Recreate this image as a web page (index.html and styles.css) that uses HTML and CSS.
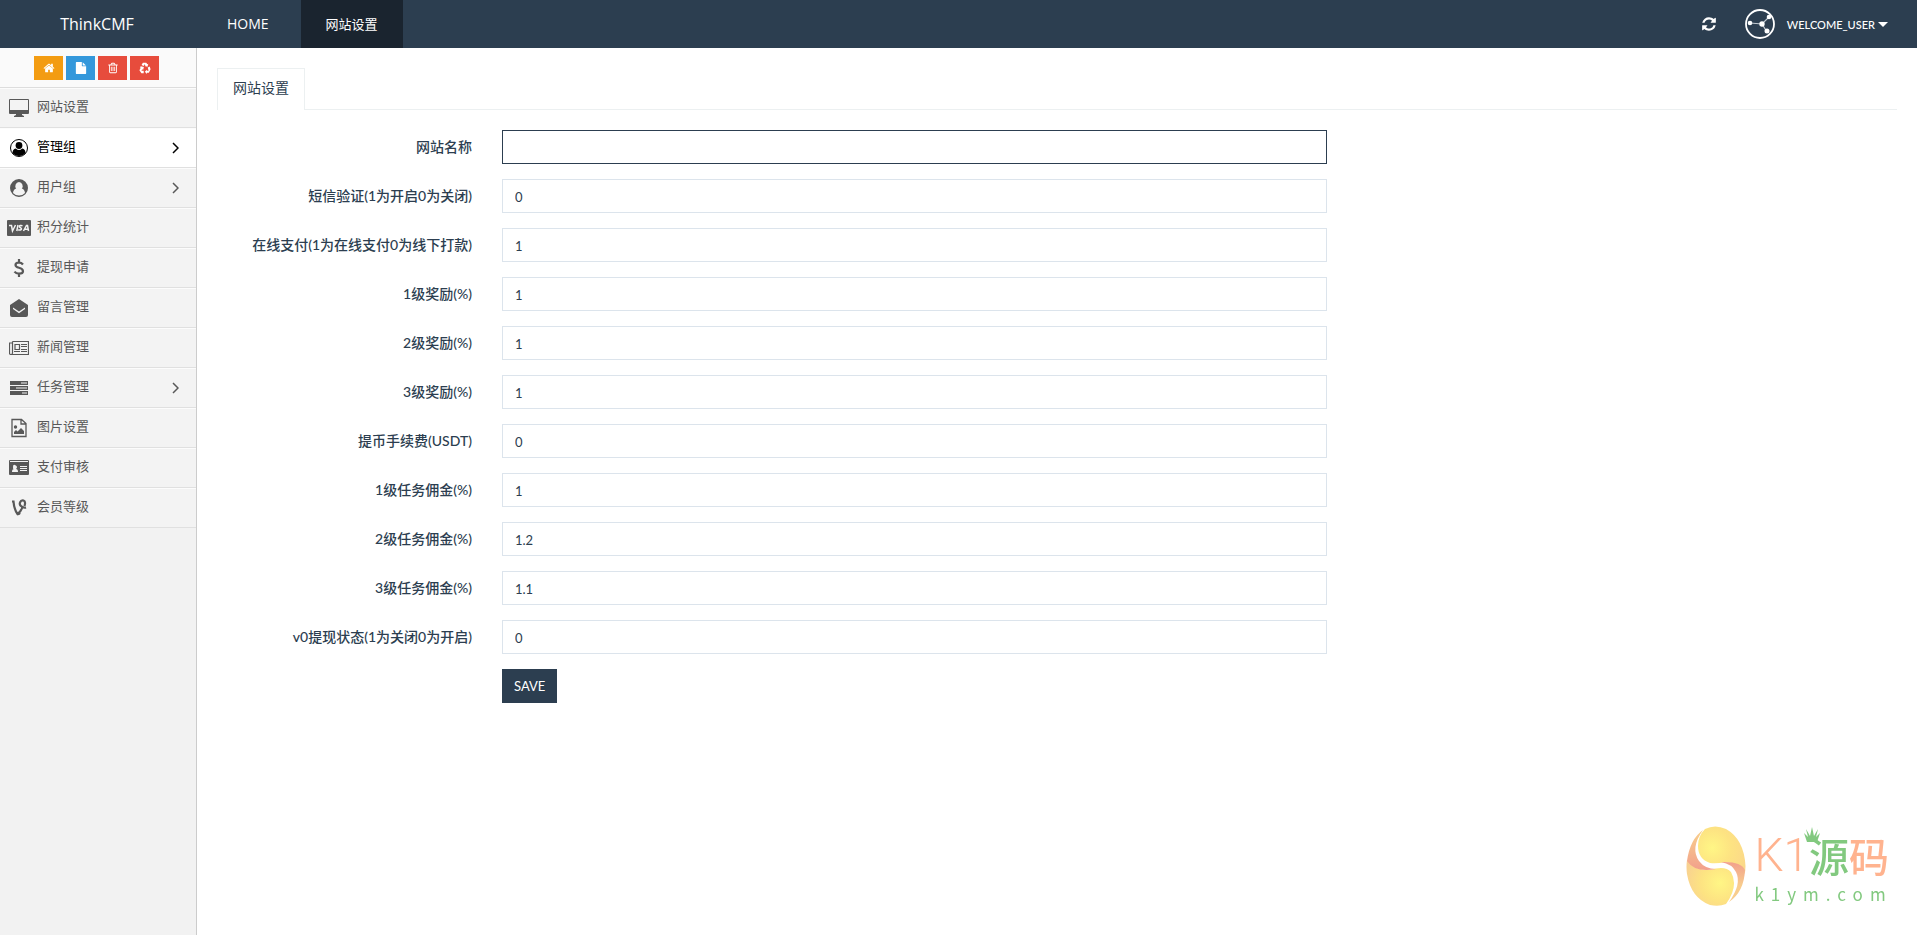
FILE: index.html
```html
<!DOCTYPE html>
<html lang="zh-CN">
<head>
  <meta charset="UTF-8">
  <meta name="viewport" content="width=device-width, initial-scale=1.0">
  <title>ThinkCMF</title>
  <link rel="stylesheet" href="styles.css">
</head>
<body>

  <!-- Navbar -->
  <header class="navbar">
    <a href="#" class="brand">ThinkCMF</a>
    <nav class="nav-tabs-top">
      <a href="#" class="home">HOME</a>
      <a href="#" class="current">网站设置</a>
    </nav>
    <div class="nav-right">
      <button type="button" class="refresh" aria-label="refresh">
        <svg viewBox="0 0 1792 1792"><path d="M1639 1056q0 5-1 7-64 268-268 434.5t-478 166.5q-146 0-282.5-55t-243.5-157l-129 129q-19 19-45 19t-45-19-19-45v-448q0-26 19-45t45-19h448q26 0 45 19t19 45-19 45l-137 137q71 66 161 102t187 36q134 0 250-65t186-179q11-17 53-117 8-23 30-23h192q13 0 22.5 9.5t9.5 22.5zm25-800v448q0 26-19 45t-45 19h-448q-26 0-45-19t-19-45 19-45l138-138q-148-137-349-137-134 0-250 65t-186 179q-11 17-53 117-8 23-30 23h-199q-13 0-22.5-9.5t-9.5-22.5v-7q65-268 270-434.5t480-166.5q146 0 284 55.5t245 156.5l130-129q19-19 45-19t45 19 19 45z"/></svg>
      </button>
      <a href="#" class="user">
        <svg class="avatar" viewBox="0 0 30 30">
          <circle cx="15" cy="15" r="14" fill="none" stroke="#fff" stroke-width="1.8"/>
          <path d="M5 14l12 1 7-7M17 15l5 8" fill="none" stroke="#c3cad1" stroke-width="1.2"/>
          <circle cx="5" cy="14" r="2.3"/><circle cx="17" cy="15" r="2.7"/><circle cx="24" cy="8" r="2.3"/><circle cx="22" cy="22" r="2.5"/>
        </svg>
        <span>WELCOME_USER</span>
        <i class="caret"></i>
      </a>
    </div>
  </header>

  <div class="container">
    <!-- Sidebar -->
    <aside class="sidebar">
      <div class="shortcuts">
        <button type="button" class="btn-orange" aria-label="home"><svg viewBox="0 0 1792 1792"><path d="M1472 992v480q0 26-19 45t-45 19h-384v-384h-256v384h-384q-26 0-45-19t-19-45v-480q0-1 .5-3t.5-3l575-474 575 474q1 2 1 6zm223-69l-62 74q-8 9-21 11h-3q-13 0-21-7l-692-577-692 577q-12 8-24 7-13-2-21-11l-62-74q-8-10-7-23.5t11-21.5l719-599q32-26 76-26t76 26l244 204v-195q0-14 9-23t23-9h192q14 0 23 9t9 23v408l219 182q10 8 11 21.5t-7 23.5z"/></svg></button>
        <button type="button" class="btn-blue" aria-label="file"><svg viewBox="0 0 1792 1792"><path d="M1152 512v-472q22 14 36 28l408 408q14 14 28 36h-472zm-128 32q0 40 28 68t68 28h544v1056q0 40-28 68t-68 28h-1344q-40 0-68-28t-28-68v-1600q0-40 28-68t68-28h800v544z"/></svg></button>
        <button type="button" class="btn-red" aria-label="trash"><svg viewBox="0 0 1792 1792"><path d="M704 736v576q0 14-9 23t-23 9h-64q-14 0-23-9t-9-23v-576q0-14 9-23t23-9h64q14 0 23 9t9 23zm256 0v576q0 14-9 23t-23 9h-64q-14 0-23-9t-9-23v-576q0-14 9-23t23-9h64q14 0 23 9t9 23zm256 0v576q0 14-9 23t-23 9h-64q-14 0-23-9t-9-23v-576q0-14 9-23t23-9h64q14 0 23 9t9 23zm128 724v-948h-896v948q0 22 7 40.5t14.5 27 10.5 8.5h832q3 0 10.5-8.5t14.5-27 7-40.5zm-672-1076h448l-48-117q-7-9-17-11h-317q-10 2-17 11zm928 32v64q0 14-9 23t-23 9h-96v948q0 83-47 143.5t-113 60.5h-832q-66 0-113-58.5t-47-141.5v-952h-96q-14 0-23-9t-9-23v-64q0-14 9-23t23-9h309l70-167q15-37 54-63t79-26h320q40 0 79 26t54 63l70 167h309q14 0 23 9t9 23z"/></svg></button>
        <button type="button" class="btn-red" aria-label="recycle"><svg viewBox="0 0 14 14"><path d="M4.5 1h4l1.2 1.6 1.2-.6-1 3.6-3.5-.9 1.2-.7L6.5 2.5 5.4 4.8 3 3.5zM2.2 5l3.5.8-.9 3.5-1-.7-1 1.7h2.7V13H2.8L.5 9.5l1.5-2.7-1-.6zM10.2 6.5l2.3-1.2 1 3.2-2 4H9.3V14L6.8 11.5 9.3 9v1.3h1.9z"/></svg></button>
      </div>
      <ul class="menu">
        <li><a href="#">
          <svg class="icon" viewBox="0 0 20 20"><path fill-rule="evenodd" d="M1 1h18q1 0 1 1v13q0 1-1 1h-6v1l2 1v1H5v-1l2-1v-1H1q-1 0-1-1V2q0-1 1-1zm0 1v10h18V2z"/></svg>
          <span>网站设置</span></a></li>
        <li class="active"><a href="#">
          <svg class="icon" viewBox="0 0 20 20"><circle cx="10" cy="10" r="8.5" fill="none" stroke="currentColor"/><circle cx="10" cy="7.5" r="3.4"/><path d="M3.5 15q0-4 3.300-4.500Q8.500 12 10 12t3.200-1.500Q16.500 11 16.500 15q-2.500 3-6.500 3t-6.500-3z"/></svg>
          <span>管理组</span>
          <svg class="arrow" viewBox="0 0 7 12"><path d="M1 1l5 5-5 5"/></svg></a></li>
        <li><a href="#">
          <svg class="icon" viewBox="0 0 20 20"><path fill-rule="evenodd" d="M10 1a9 9 0 1 0 0 18 9 9 0 0 0 0-18zM10 4a4 4 0 0 0-2.8 6.500Q4.500 11.200 4 15q2.500 2.500 6 2.500t6-2.500q-.5-3.800-3.200-4.500A4 4 0 0 0 10 4z"/></svg>
          <span>用户组</span>
          <svg class="arrow" viewBox="0 0 7 12"><path d="M1 1l5 5-5 5"/></svg></a></li>
        <li><a href="#">
          <svg class="icon visa" viewBox="0 0 24 16"><rect width="24" height="16" rx="1"/><path d="M2 5.5h2.500L5.500 11l3-6M11 5l-1.200 6M15.500 5.800q-3-1-3 .7 0 .8 1.200 1.400 1.300.8.3 1.800-1 .8-2.800 0M16.500 11l3-5.500h1L21.500 11M18 9.300h3" fill="none" stroke="#f3f3f3" stroke-width="1.5"/></svg>
          <span>积分统计</span></a></li>
        <li><a href="#">
          <svg class="icon" viewBox="0 0 20 20"><path d="M14 6.500q-1.500-2-4.200-2Q6.500 4.600 6.500 7q0 1.900 3.500 2.700 4 1 4 3.500 0 2.500-4 2.500-3 0-4.500-2M10 1v3M10 16v3" fill="none" stroke="currentColor" stroke-width="2.2"/></svg>
          <span>提现申请</span></a></li>
        <li><a href="#">
          <svg class="icon" viewBox="0 0 20 20"><path fill-rule="evenodd" d="M10 1l9 6v10q0 2-2 2H3q-2 0-2-2V7zm0 12.500L4 9.500v1.500l6 4.200 6-4.200V9.500z"/></svg>
          <span>留言管理</span></a></li>
        <li><a href="#">
          <svg class="icon" viewBox="0 0 20 20"><path d="M3.500 3.500h16v13h-18q-1 0-1-2V5h3m0-1.500V15q0 1.500-1.500 1.500" fill="none" stroke="currentColor" stroke-width="1.200"/><path d="M6 6.500h4.500v5H6z" fill="none" stroke="currentColor" stroke-width="1.200"/><path d="M12 6h6v1h-6zM12 8h6v1h-6zM12 11h6v1h-6zM5 13h6v1H5zM12 13h6v1h-6z"/></svg>
          <span>新闻管理</span></a></li>
        <li><a href="#">
          <svg class="icon" viewBox="0 0 20 20"><path fill-rule="evenodd" d="M1 3h18v4H1zM1 8h18v4H1zM1 13h18v4H1zM12 4.500v1h6v-1zM7 9.500v1h11v-1zM13 14.500v1h5v-1z"/></svg>
          <span>任务管理</span>
          <svg class="arrow" viewBox="0 0 7 12"><path d="M1 1l5 5-5 5"/></svg></a></li>
        <li><a href="#">
          <svg class="icon" viewBox="0 0 20 20"><path d="M3 1.500h9.500l4.500 4v13H3zM12 2v4h5" fill="none" stroke="currentColor" stroke-width="1.3"/><circle cx="6.500" cy="9" r="1.700"/><path d="M5 16v-2l2-2 1.500 1.500L12 10l3 3v3z"/></svg>
          <span>图片设置</span></a></li>
        <li><a href="#">
          <svg class="icon" viewBox="0 0 20 20"><path fill-rule="evenodd" d="M1 2h18q1 0 1 1v13q0 1-1 1H1q-1 0-1-1V3q0-1 1-1zm0 1v1h18V3zM3 14h6q0-3-2-3 1-1 1-2T6 7 4 9t1 2q-2 0-2 3zM11 8v1h7V8zM11 10v1h7v-1zM11 12v1h7v-1z"/></svg>
          <span>支付审核</span></a></li>
        <li><a href="#">
          <svg class="icon" viewBox="0 0 20 20"><path d="M3 3.500h1.500Q5 11 8.500 16q3.500-2.500 5-7Q10 7.500 11 4.500q1-2.500 3.500-2 2.500 1 1 5.500M17 9.500q-1.500.5-3.500-.5M8.500 16q1.500.5 2.500-1" fill="none" stroke="currentColor" stroke-width="2.2"/></svg>
          <span>会员等级</span></a></li>
      </ul>
    </aside>

    <!-- Content -->
    <main class="content">
      <div class="tabs"><a href="#">网站设置</a></div>
      <form class="form">
        <div class="form-group">
          <label for="site_name">网站名称</label>
          <div class="control"><input type="text" id="site_name" class="focus" value=""></div>
        </div>
        <div class="form-group">
          <label for="sms">短信验证(1为开启0为关闭)</label>
          <div class="control"><input type="text" id="sms" value="0"></div>
        </div>
        <div class="form-group">
          <label for="pay">在线支付(1为在线支付0为线下打款)</label>
          <div class="control"><input type="text" id="pay" value="1"></div>
        </div>
        <div class="form-group">
          <label for="reward1">1级奖励(%)</label>
          <div class="control"><input type="text" id="reward1" value="1"></div>
        </div>
        <div class="form-group">
          <label for="reward2">2级奖励(%)</label>
          <div class="control"><input type="text" id="reward2" value="1"></div>
        </div>
        <div class="form-group">
          <label for="reward3">3级奖励(%)</label>
          <div class="control"><input type="text" id="reward3" value="1"></div>
        </div>
        <div class="form-group">
          <label for="fee">提币手续费(USDT)</label>
          <div class="control"><input type="text" id="fee" value="0"></div>
        </div>
        <div class="form-group">
          <label for="task1">1级任务佣金(%)</label>
          <div class="control"><input type="text" id="task1" value="1"></div>
        </div>
        <div class="form-group">
          <label for="task2">2级任务佣金(%)</label>
          <div class="control"><input type="text" id="task2" value="1.2"></div>
        </div>
        <div class="form-group">
          <label for="task3">3级任务佣金(%)</label>
          <div class="control"><input type="text" id="task3" value="1.1"></div>
        </div>
        <div class="form-group">
          <label for="v0">v0提现状态(1为关闭0为开启)</label>
          <div class="control"><input type="text" id="v0" value="0"></div>
        </div>
        <div class="form-group actions">
          <div class="control"><button type="submit" class="save">SAVE</button></div>
        </div>
      </form>
    </main>
  </div>

  <!-- Watermark -->
  <div class="watermark">
    <svg class="egg" viewBox="0 0 60 80">
      <defs>
        <radialGradient id="g1" cx="0.3" cy="0.45" r="0.8"><stop offset="0" stop-color="#fff685"/><stop offset="0.5" stop-color="#fde382"/><stop offset="1" stop-color="#fbd78a"/></radialGradient>
        <radialGradient id="g2" cx="0.7" cy="0.5" r="0.8"><stop offset="0" stop-color="#fff685"/><stop offset="0.5" stop-color="#fde382"/><stop offset="1" stop-color="#f8cf92"/></radialGradient>
        <linearGradient id="g3" x1="0" y1="0" x2="0" y2="1"><stop offset="0" stop-color="#f8d08c"/><stop offset="1" stop-color="#f2a08c"/></linearGradient>
        <linearGradient id="g4" x1="0" y1="0" x2="0" y2="1"><stop offset="0" stop-color="#f2a08c"/><stop offset="0.6" stop-color="#f8cd8d"/></linearGradient>
      </defs>
      <path d="M19 3Q29-2 40 3 58 13 59.500 40q0 5-1 8Q53 37 40 36q-10 2-16 1Q12 33 12 20 12 10 19 3z" fill="url(#g1)"/>
      <path d="M1 34Q8 44 24 44q15-5 21 2 8 14-5 32-7 3-16 1Q5 72 1 48q-1-7 0-14z" fill="url(#g2)"/>
      <path d="M17 4Q4 22 13 35q6 8 17 8Q9 47 1 35 4 13 17 4z" fill="url(#g3)"/>
      <path d="M43 76Q56 58 50 46q-4-8-15-10 20-1 24 8-1 22-16 32z" fill="url(#g4)"/>
    </svg>
    <div class="mark-text">
      <div class="mark-name"><span class="k1">K1</span><span class="green">源</span><span>码</span>
        <svg class="crown" viewBox="0 0 16 16"><path d="M3 15l-3-9 4 4-2-8 4 7 2-9 2 9 4-7-2 8 4-4-3 9z"/></svg>
      </div>
      <div class="mark-url">k1ym.com</div>
    </div>
  </div>

</body>
</html>
```
FILE: styles.css
```css
* {
  box-sizing: border-box;
}
body {
  margin: 0;
  min-height: 100vh;
  display: flex;
  flex-direction: column;
  font-family: "Open Sans", "Noto Sans CJK SC", sans-serif;
  font-size: 13px;
  color: #2c3e50;
  background-color: #fff;
}
a {
  color: inherit;
  text-decoration: none;
}
button {
  border: none;
  padding: 0;
  cursor: pointer;
  color: #fff;
}
svg {
  fill: currentColor;
}

/* navbar */
.navbar {
  display: flex;
  height: 48px;
  line-height: 48px;
  background-color: #2c3e50;
  color: #fff;
}
.brand {
  width: 194px;
  text-align: center;
  font-size: 16px;
}
.nav-tabs-top {
  display: flex;
  gap: 8px;
  padding-left: 9px;
}
.nav-tabs-top a {
  padding: 0 24px;
}
.nav-tabs-top .home {
  font-size: 14px;
}
.nav-tabs-top .current {
  padding: 0 25px;
  background-color: #1a242f;
}
.nav-right {
  display: flex;
  align-items: center;
  margin-left: auto;
  padding-right: 29px;
  gap: 28px;
}
.refresh {
  display: flex;
  background: none;
}
.refresh svg {
  width: 16px;
  height: 16px;
}
.user {
  display: flex;
  align-items: center;
  font-family: Lato, sans-serif;
  font-size: 11px;
  font-weight: 500;
}
.user span {
  padding-top: 2px;
}
.avatar {
  width: 30px;
  height: 30px;
  margin-right: 12px;
}
.caret {
  margin-left: 3px;
  border: 5px solid transparent;
  border-top-color: #fff;
  border-bottom: 0;
}

.container {
  display: flex;
  flex: 1;
}

/* sidebar */
.sidebar {
  width: 197px;
  background-color: #f2f2f2;
  border-right: 1px solid #ccc;
}
.shortcuts {
  display: flex;
  justify-content: center;
  align-items: center;
  gap: 3px;
  height: 40px;
  padding-right: 3px;
  background-color: #fafafa;
  border-bottom: 1px solid #ddd;
}
.shortcuts button {
  display: flex;
  justify-content: center;
  align-items: center;
  width: 29px;
  height: 24px;
}
.shortcuts svg {
  width: 12px;
  height: 12px;
}
.btn-orange {
  background-color: #f39c12;
}
.btn-blue {
  background-color: #3498db;
}
.btn-red {
  background-color: #e74c3c;
}
.menu {
  list-style: none;
  margin: 0;
  padding: 0;
}
.menu a {
  display: flex;
  align-items: center;
  height: 40px;
  padding: 0 17px 0 9px;
  color: #585858;
  background-color: #f3f3f3;
  border-top: 1px solid #fcfcfc;
  border-bottom: 1px solid #e0e0e0;
}
.menu span {
  padding-bottom: 5px;
}
.menu .active a {
  color: #000;
  background-color: #fff;
}
.icon {
  width: 20px;
  height: 20px;
  margin-right: 8px;
}
.menu .visa {
  width: 24px;
  height: 16px;
  margin-left: -2px;
  margin-right: 6px;
}
.arrow {
  width: 7px;
  height: 12px;
  margin-left: auto;
  fill: none;
  stroke: currentColor;
  stroke-width: 1.5;
}

/* content */
.content {
  flex: 1;
  padding: 20px;
}
.tabs {
  display: flex;
  border-bottom: 1px solid #ecf0f1;
}
.tabs a {
  padding: 0 15px;
  height: 42px;
  line-height: 38px;
  margin-bottom: -1px;
  font-size: 14px;
  background-color: #fff;
  border: 1px solid #ecf0f1;
  border-bottom: 0;
}
.form {
  margin: 20px -15px 0;
  font-family: Lato, "Noto Sans CJK SC", sans-serif;
  font-size: 14px;
}
.form-group {
  display: flex;
  margin-bottom: 15px;
}
.form-group label {
  width: 16.6667%;
  padding: 0 15px;
  line-height: 33px;
  text-align: right;
  font-weight: 500;
}
.control {
  width: 50%;
  padding: 0 15px;
}
.control input {
  display: block;
  width: 100%;
  height: 34px;
  padding: 2px 12px 0;
  border: 1px solid #dce4ec;
  border-radius: 0;
  outline: none;
  font-family: Lato, sans-serif;
  font-size: 13px;
  color: #2c3e50;
}
.control .focus {
  border-color: #2c3e50;
}
.actions .control {
  margin-left: 16.6667%;
}
.save {
  height: 34px;
  padding: 0 12px;
  font-family: Lato, sans-serif;
  font-size: 13px;
  background-color: #2c3e50;
}

/* watermark */
.watermark {
  position: fixed;
  right: 28px;
  bottom: 29px;
  display: flex;
  gap: 8px;
  color: #ffb38f;
}
.egg {
  width: 60px;
  height: 80px;
}
.mark-name {
  display: flex;
  position: relative;
  height: 56px;
  line-height: 58px;
  font-family: "Noto Sans CJK SC", sans-serif;
  font-size: 40px;
  font-weight: 500;
}
.k1 {
  font-family: Roboto, sans-serif;
  font-size: 46px;
  font-weight: 300;
}
.green {
  color: #82c97f;
}
.crown {
  position: absolute;
  left: 50px;
  top: 1px;
  width: 16px;
  height: 16px;
  color: #82c97f;
}
.mark-url {
  margin-right: -7px;
  color: #82c97f;
  font-family: "Noto Sans CJK SC", sans-serif;
  font-size: 17px;
  line-height: 24px;
  letter-spacing: 7px;
}
```
